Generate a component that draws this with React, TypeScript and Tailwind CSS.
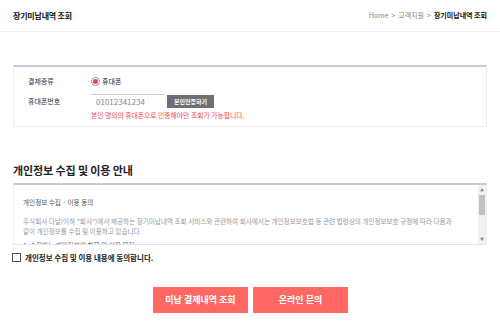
const FONT = { fontFamily: '"Noto Sans CJK KR", "Noto Sans", sans-serif' }

export default function App() {
  return (
    <div className="w-[500px] h-[325px] bg-white text-[#222] overflow-hidden" style={FONT}>
      {/* header */}
      <div className="flex h-[32px] items-center justify-between border-b border-[#f0f0f0] px-[13px]">
        <h1 className="text-[8px] font-bold tracking-[-0.2px] text-[#111]">장기미납내역 조회</h1>
        <div className="flex items-center gap-[3px] text-[7px] text-[#888]">
          <span>Home</span>
          <span>&gt;</span>
          <span>고객지원</span>
          <span>&gt;</span>
          <span className="font-bold text-[#111]">장기미납내역 조회</span>
        </div>
      </div>

      {/* form */}
      <div className="mx-[13px] mt-[33px] h-[62px] border-x border-b border-t-2 border-x-[#eee] border-b-[#eee] border-t-[#ccc] pt-[6px]">
        <div className="flex h-[16px] items-center">
          <div className="w-[77px] pl-[14px] text-[7px] text-[#333]">결제종류</div>
          <label className="flex items-center gap-[2px] text-[7px] text-[#222]">
            <span className="flex h-[9px] w-[9px] items-center justify-center rounded-full border border-[#999] bg-white">
              <span className="h-[5px] w-[5px] rounded-full bg-[#f0414e]" />
            </span>
            휴대폰
          </label>
        </div>
        <div className="mt-[5px] flex h-[14px] items-center">
          <div className="w-[77px] pl-[14px] text-[7px] text-[#333]">휴대폰번호</div>
          <div className="flex h-[14px] w-[73px] items-center border-t border-[#ccc] pl-[5px] text-[8px] text-[#888]">
            01012341234
          </div>
          <button className="ml-[3px] h-[13px] w-[47px] bg-[#6c6f73] text-[6px] font-bold text-white">
            본인인증하기
          </button>
        </div>
        <p className="mt-[2px] pl-[77px] text-[6.8px] text-[#ef4b4b]">본인 명의의 휴대폰으로 인증해야만 조회가 가능합니다.</p>
      </div>

      {/* privacy */}
      <h2 className="mx-[13px] mt-[35px] text-[11px] font-bold tracking-[-0.1px] text-[#222]">개인정보 수집 및 이용 안내</h2>
      <div className="mx-[13px] mt-[4px] flex h-[62px] border-x border-b border-t-2 border-x-[#eee] border-b-[#e5e5e5] border-t-[#ccc]">
        <div className="flex-1 overflow-hidden break-keep pl-[9px] pr-[15px] pt-[12px] text-[6.6px] leading-[10px] text-[#999]">
          <p className="text-[#555]">개인정보 수집 · 이용 동의</p>
          <p className="mt-[9px]">
            주식회사 다날(이하 "회사")에서 제공하는 장기미납내역 조회 서비스와 관련하여 회사에서는 개인정보보호법 등 관련 법령상의 개인정보보호 규정에 따라 다음과 같이 개인정보를 수집 및 이용하고 있습니다.
          </p>
          <p className="mt-[4px] text-[#666]">1. 수집하는 개인정보의 항목 및 이용 목적</p>
        </div>
        <div className="flex w-[8px] flex-col items-center bg-[#f1f1f1]">
          <span className="mt-[3px] text-[4px] leading-none text-[#888]">▲</span>
          <div className="mt-[3px] h-[20px] w-[6px] bg-[#c1c1c1]" />
          <div className="flex-1" />
          <span className="mb-[3px] text-[4px] leading-none text-[#888]">▼</span>
        </div>
      </div>

      <label className="mx-[12px] mt-[7px] flex items-center gap-[4px]">
        <span className="h-[9px] w-[9px] border border-[#555] bg-white" />
        <span className="text-[7.5px] font-bold text-[#222]">개인정보 수집 및 이용 내용에 동의합니다.</span>
      </label>

      {/* buttons */}
      <div className="mt-[24px] flex justify-center gap-[5px] pl-[1px]">
        <button className="h-[26px] w-[95px] bg-[#ff6863] text-[9px] font-bold text-white">미납 결제내역 조회</button>
        <button className="h-[26px] w-[95px] bg-[#ff6863] text-[9px] font-bold text-white">온라인 문의</button>
      </div>
    </div>
  )
}
